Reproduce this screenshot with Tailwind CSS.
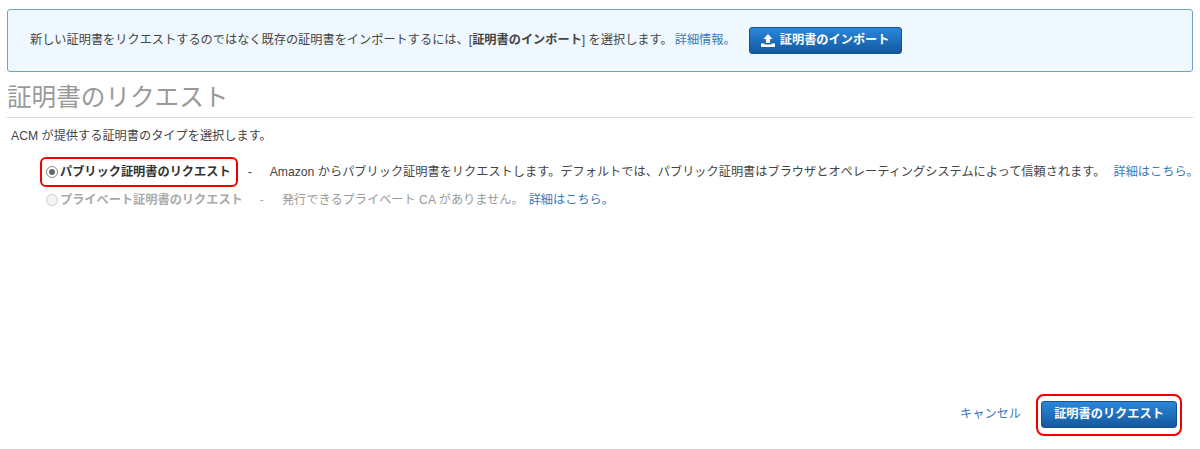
<!DOCTYPE html>
<html>
<head>
    <meta charset="UTF-8" />
    <title>証明書のリクエスト</title>
    <script src="https://cdn.jsdelivr.net/npm/@tailwindcss/browser@4"></script>
</head>
<body class="bg-white h-[449px] overflow-hidden font-['Liberation_Sans','Noto_Sans_CJK_JP',sans-serif] text-[12.2px] text-[#444]">
    <div class="relative h-[449px] overflow-hidden">
        <!-- Info banner -->
        <div class="ml-[7px] mt-[9px] w-[1186px] h-[63px] flex items-center pl-[22px] bg-[#f0f8ff] border border-[#6f9fd3] rounded-[3px]">
            <span class="whitespace-nowrap">新しい証明書をリクエストするのではなく既存の証明書をインポートするには、[<b>証明書のインポート</b>] を選択します。<a class="text-[#3a78bd] ml-[2px]">詳細情報。</a></span>
            <button class="ml-[13px] w-[153px] h-[27px] flex items-center justify-center gap-[5px] rounded-[3px] border border-[#15508f] bg-gradient-to-b from-[#2a87dc] to-[#15599f] text-white font-bold whitespace-nowrap">
                <svg class="w-[14px] h-[13px]" viewBox="0 0 14 13" fill="currentColor"><path d="M7 0l4.500 5H9v4H5V5H2.500zM0 9.500h3.500v1h7v-1H14V13H0z"/></svg>
                証明書のインポート
            </button>
        </div>

        <!-- Heading -->
        <div class="ml-[7px] mr-[7px] h-[46px] border-b border-[#d5d5d5] flex items-end pb-[4px]">
            <h1 class="text-[24.6px] leading-[30px] text-[#999] font-normal">証明書のリクエスト</h1>
        </div>
        <p class="ml-[11px] mt-[9px] leading-[18px]">ACM が提供する証明書のタイプを選択します。</p>

        <!-- Options -->
        <div class="ml-[46px] mt-[13px] flex items-center h-[28px] whitespace-nowrap">
            <span class="w-[12px] h-[12px] rounded-full border border-[#888] bg-white flex items-center justify-center shrink-0">
                <span class="w-[6px] h-[6px] rounded-full bg-[#666]"></span>
            </span>
            <b class="ml-[2px] text-[#333]">パブリック証明書のリクエスト</b>
            <span class="ml-[17px]">-</span>
            <span class="ml-[18px]">Amazon からパブリック証明書をリクエストします。デフォルトでは、パブリック証明書はブラウザとオペレーティングシステムによって信頼されます。</span>
            <a class="ml-[8px] text-[#3a78bd]">詳細はこちら。</a>
        </div>
        <div class="ml-[46px] flex items-center h-[28px] whitespace-nowrap text-[#aaa]">
            <span class="w-[12px] h-[12px] rounded-full border border-[#ccc] bg-[#f5f5f5] shrink-0"></span>
            <b class="ml-[2px]">プライベート証明書のリクエスト</b>
            <span class="ml-[17px]">-</span>
            <span class="ml-[18px] text-[#999]">発行できるプライベート CA がありません。</span>
            <a class="ml-[5px] text-[#3a78bd]">詳細はこちら。</a>
        </div>

        <!-- Footer actions -->
        <div class="absolute right-[23px] top-[401px] flex items-center gap-[20px]">
            <a class="text-[#3a78bd]">キャンセル</a>
            <button class="w-[136px] h-[27px] rounded-[3px] border border-[#15508f] bg-gradient-to-b from-[#2a87dc] to-[#15599f] text-white font-bold whitespace-nowrap">証明書のリクエスト</button>
        </div>

        <!-- Red annotations -->
        <div class="absolute left-[40px] top-[157px] w-[198px] h-[30px] border-2 border-[#f00000] rounded-[6px]"></div>
        <div class="absolute left-[1036px] top-[394px] w-[146px] h-[42px] border-2 border-[#f00000] rounded-[8px]"></div>
    </div>
</body>
</html>
